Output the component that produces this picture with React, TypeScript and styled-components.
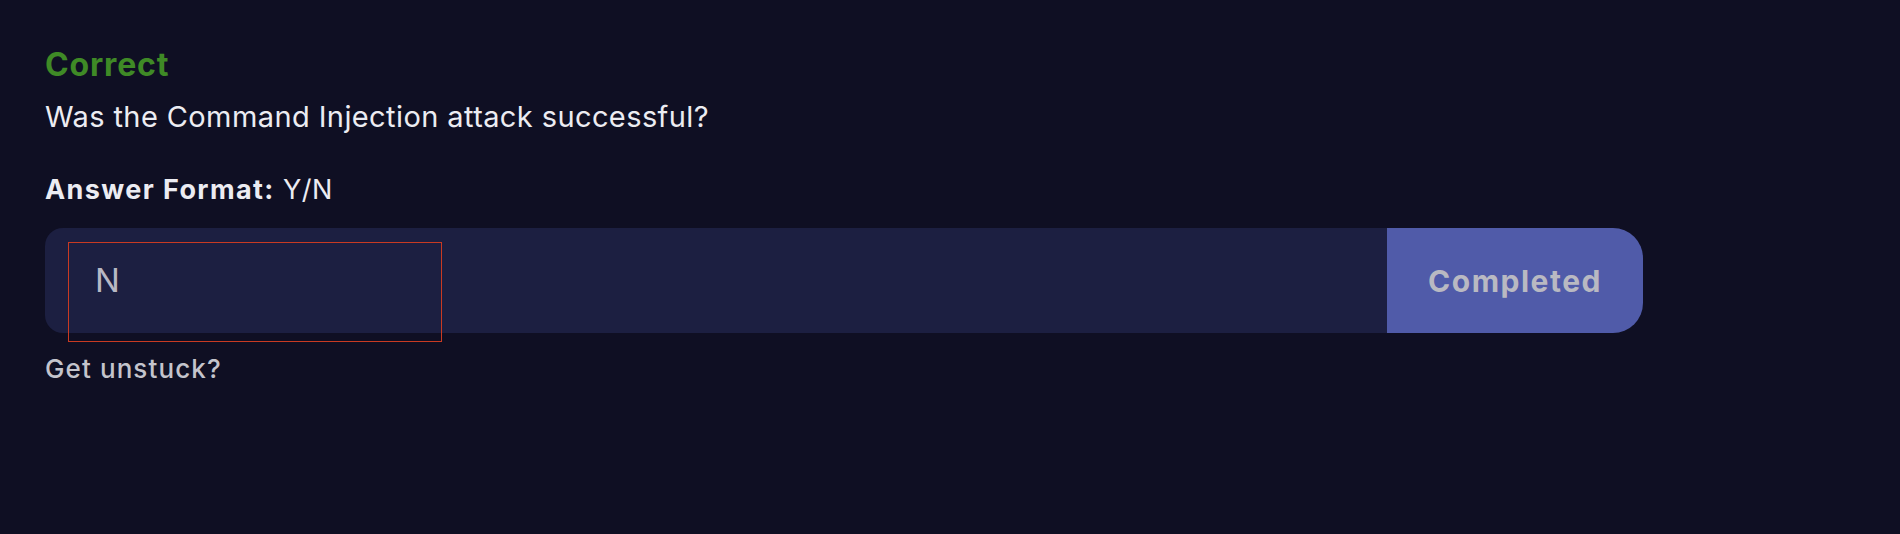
import styled, { createGlobalStyle } from "styled-components";

const GlobalStyle = createGlobalStyle`
  html, body {
    margin: 0;
    padding: 0;
    background: #0f0f23;
  }
  body {
    font-family: "Inter", "Open Sans", sans-serif;
  }
`;

interface IStatus {
  correct?: boolean;
}

export default function App() {
  return (
    <>
      <GlobalStyle />
      <Page>
        <Status correct>Correct</Status>
        <Question>Was the Command Injection attack successful?</Question>
        <AnswerFormat>
          <strong>Answer Format:</strong> Y/N
        </AnswerFormat>
        <AnswerRow>
          <AnswerInput value="N" readOnly />
          <SubmitButton disabled>Completed</SubmitButton>
          <Highlight />
        </AnswerRow>
        <Unstuck>Get unstuck?</Unstuck>
      </Page>
    </>
  );
}

const Page = styled.div`
  min-height: 534px;
  box-sizing: border-box;
  padding: 45px 0 0 45px;
  width: 1643px;
  display: flex;
  flex-direction: column;
  align-items: flex-start;
`;

const Status = styled.h3<IStatus>`
  margin: 0;
  font-size: 32px;
  line-height: 40px;
  font-weight: 700;
  letter-spacing: 0.85px;
  color: ${(props) => (props.correct ? "#3f8a26" : "#c0392b")};
`;

const Question = styled.p`
  margin: 12px 0 0;
  font-size: 29px;
  line-height: 40px;
  letter-spacing: 0.4px;
  color: #ececf2;
`;

const AnswerFormat = styled.p`
  margin: 35px 0 0;
  font-size: 27px;
  line-height: 36px;
  letter-spacing: 0.5px;
  color: #ececf2;

  strong {
    font-weight: 700;
    letter-spacing: 1.4px;
  }
`;

const AnswerRow = styled.div`
  position: relative;
  margin-top: 20px;
  width: 100%;
  height: 105px;
  display: flex;
`;

const AnswerInput = styled.input`
  flex: 1;
  min-width: 0;
  border: none;
  outline: none;
  margin: 0;
  padding: 0 0 0 50px;
  height: 105px;
  line-height: 105px;
  border-radius: 18px 0 0 18px;
  background: #1c1f41;
  color: #b8b8c4;
  font-family: "Inter", "Open Sans", sans-serif;
  font-size: 33px;
`;

const SubmitButton = styled.button`
  width: 256px;
  height: 105px;
  border: none;
  margin: 0;
  padding: 0;
  border-radius: 0 30px 30px 0;
  background: #505ba9;
  color: #b9b9c2;
  font-family: "Inter", "Open Sans", sans-serif;
  font-size: 30px;
  font-weight: 700;
  letter-spacing: 1.5px;
`;

const Highlight = styled.div`
  position: absolute;
  left: 23px;
  top: 14px;
  width: 374px;
  height: 100px;
  box-sizing: border-box;
  border: 1px solid #c93a22;
  pointer-events: none;
`;

const Unstuck = styled.a`
  margin-top: 19px;
  font-size: 26px;
  font-weight: 500;
  line-height: 34px;
  letter-spacing: 1.1px;
  color: #c4c4cc;
  cursor: pointer;
`;
